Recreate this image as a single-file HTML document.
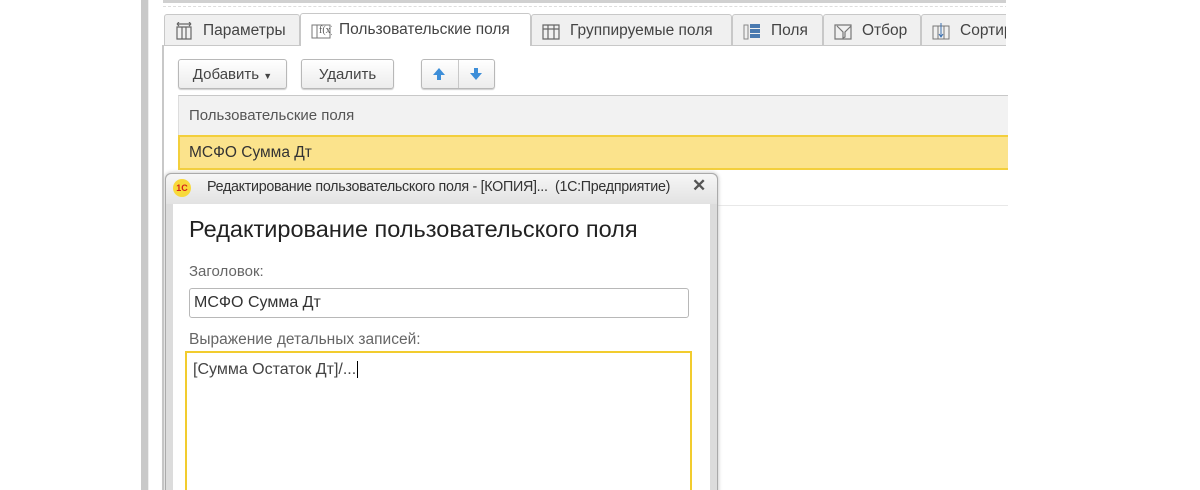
<!DOCTYPE html>
<html style="overflow:hidden;height:490px"><head><meta charset="utf-8"><style>
body{margin:0;width:1200px;height:490px;background:#fff;position:relative;overflow:hidden;font-family:"Liberation Sans",Arial,sans-serif;color:#4a4a4a}
.a{position:absolute}
.tab{position:absolute;top:14px;height:31px;background:#f0f0f0;border:1px solid #c8c8c8;border-bottom:none;border-radius:3px 3px 0 0;font-size:15.5px;line-height:31px;box-sizing:border-box;padding-left:38px;color:#444;white-space:nowrap;overflow:hidden}
.tab svg{position:absolute;left:9px;top:7px}
.btn{position:absolute;top:59px;height:30px;border:1px solid #b8b8b8;border-radius:3px;background:linear-gradient(#fff,#ececec);box-shadow:0 1px 1px #ccc;font-size:15px;line-height:29px;text-align:center;color:#444;box-sizing:border-box}
</style></head><body>
<div class="a" style="left:141px;top:0;width:7px;height:490px;background:#c9c9c9"></div>
<div class="a" style="left:148px;top:0;width:1px;height:490px;background:#eee"></div>
<div class="a" style="left:163px;top:0;width:850px;height:3px;background:#d0d0d0"></div>
<div class="a" style="left:163px;top:6px;width:845px;border-top:1px dashed #ddd"></div>
<div class="a" style="left:162px;top:45px;width:2px;height:445px;background:#c8c8c8"></div>
<div class="a" style="left:163px;top:45px;width:845px;height:1px;background:#c8c8c8"></div>
<div class="tab" style="left:164px;width:136px">
<svg width="20" height="18" viewBox="0 0 20 18"><path d="M3 5h14v12H3zM8 5v12M12 5v12M3 2h14M3 2l2-2M3 2l2 2M17 2l-2-2M17 2l-2 2" fill="none" stroke="#666" stroke-width="1.2"/></svg>Параметры</div>
<div class="tab" style="left:300px;width:231px;background:#fff;top:13px;height:33px">
<svg width="22" height="18" viewBox="0 0 22 18"><path d="M2 4h18v13H2zM7 4v13" fill="none" stroke="#777"/><text x="9" y="12" font-size="10" fill="#555" font-family="Liberation Serif">f(x)</text></svg>Пользовательские поля</div>
<div class="tab" style="left:531px;width:201px">
<svg width="20" height="18" viewBox="0 0 20 18"><path d="M2 3h16v14H2zM2 7h16M7 3v14M13 3v14" fill="none" stroke="#666" stroke-width="1.2"/></svg>Группируемые поля</div>
<div class="tab" style="left:732px;width:91px">
<svg width="20" height="18" viewBox="0 0 20 18"><path d="M2 3h4v14H2z" fill="none" stroke="#888"/><rect x="8" y="2" width="10" height="4" fill="#4a7ab0"/><rect x="8" y="7" width="10" height="4" fill="#4a7ab0"/><rect x="8" y="12" width="10" height="4" fill="#4a7ab0"/></svg>Поля</div>
<div class="tab" style="left:823px;width:98px">
<svg width="20" height="18" viewBox="0 0 20 18"><path d="M2 3h16v14H2zM4 4l6 6v6l2-1v-5l6-6" fill="none" stroke="#777" stroke-width="1.2"/></svg>Отбор</div>
<div class="tab" style="left:921px;width:90px">
<svg width="20" height="18" viewBox="0 0 20 18"><path d="M2 4h16v13H2zM7 4v13M13 4v13" fill="none" stroke="#777"/><path d="M10 1v13M8 12l2 3 2-3" stroke="#3a6fb0" fill="none"/></svg>Сортир</div>
<div class="a" style="left:1006px;top:0;width:194px;height:490px;background:#fff"></div>
<div class="btn" style="left:178px;width:109px">Добавить <span style="font-size:9px">▼</span></div>
<div class="btn" style="left:301px;width:93px">Удалить</div>
<div class="btn" style="left:421px;width:74px"><span class="a" style="left:36px;top:0;width:1px;height:28px;background:#c8c8c8"></span>
<svg class="a" style="left:10px;top:7px" width="14" height="14" viewBox="0 0 14 14"><path d="M7 1L1 8h4v5h4V8h4z" fill="#3d8ed8"/></svg>
<svg class="a" style="left:47px;top:7px" width="14" height="14" viewBox="0 0 14 14"><path d="M7 13L1 6h4V1h4v5h4z" fill="#3d8ed8"/></svg></div>
<div class="a" style="left:178px;top:95px;width:830px;height:40px;background:#f2f2f2;border-top:1px solid #c8c8c8;border-left:1px solid #ddd;font-size:15px;line-height:40px;padding-left:10px;box-sizing:border-box;color:#555">Пользовательские поля</div>
<div class="a" style="left:178px;top:135px;width:830px;height:35px;background:#fbe38c;border:2px solid #f3cf3c;border-right:none;box-sizing:border-box;font-size:15.5px;line-height:31px;padding-left:9px;color:#333">МСФО Сумма Дт</div>
<div class="a" style="left:716px;top:205px;width:292px;height:1px;background:#e8e8e8"></div>
<!-- dialog -->
<div class="a" style="left:165px;top:173px;width:553px;height:330px;background:#dcdcdc;border:1px solid #aaa;border-radius:6px 6px 0 0;box-sizing:border-box;box-shadow:0 0 4px #bbb"></div>
<div class="a" style="left:166px;top:174px;width:551px;height:30px;background:linear-gradient(#f6f6f6,#e2e2e2);border-radius:6px 6px 0 0"></div>
<div class="a" style="left:173px;top:179px;width:18px;height:18px;border-radius:50%;background:#f8d93a;color:#d3221b;font-size:9px;font-weight:bold;line-height:18px;text-align:center">1С</div>
<div class="a" style="left:207px;top:179px;font-size:14.3px;color:#333;letter-spacing:-0.3px;white-space:nowrap">Редактирование пользовательского поля - [КОПИЯ]...&nbsp; (1С:Предприятие)</div>
<div class="a" style="left:692px;top:176px;font-size:17px;color:#555;font-weight:bold">✕</div>
<div class="a" style="left:173px;top:204px;width:537px;height:290px;background:#fff"></div>
<div class="a" style="left:189px;top:216px;font-size:23.5px;color:#222;white-space:nowrap">Редактирование пользовательского поля</div>
<div class="a" style="left:189px;top:263px;font-size:15px;color:#666">Заголовок:</div>
<div class="a" style="left:189px;top:288px;width:500px;height:30px;border:1px solid #b8b8b8;border-radius:3px;box-sizing:border-box;font-size:16px;line-height:28px;padding-left:4px;color:#333">МСФО Сумма Дт</div>
<div class="a" style="left:189px;top:331px;font-size:15.5px;color:#666">Выражение детальных записей:</div>
<div class="a" style="left:185px;top:351px;width:507px;height:160px;border:2px solid #f2cc2e;box-sizing:border-box;font-size:16px;padding:8px 0 0 6px;color:#444">[Сумма Остаток Дт]/...<span style="border-left:1px solid #000;margin-left:1px"></span></div>
</body></html>
